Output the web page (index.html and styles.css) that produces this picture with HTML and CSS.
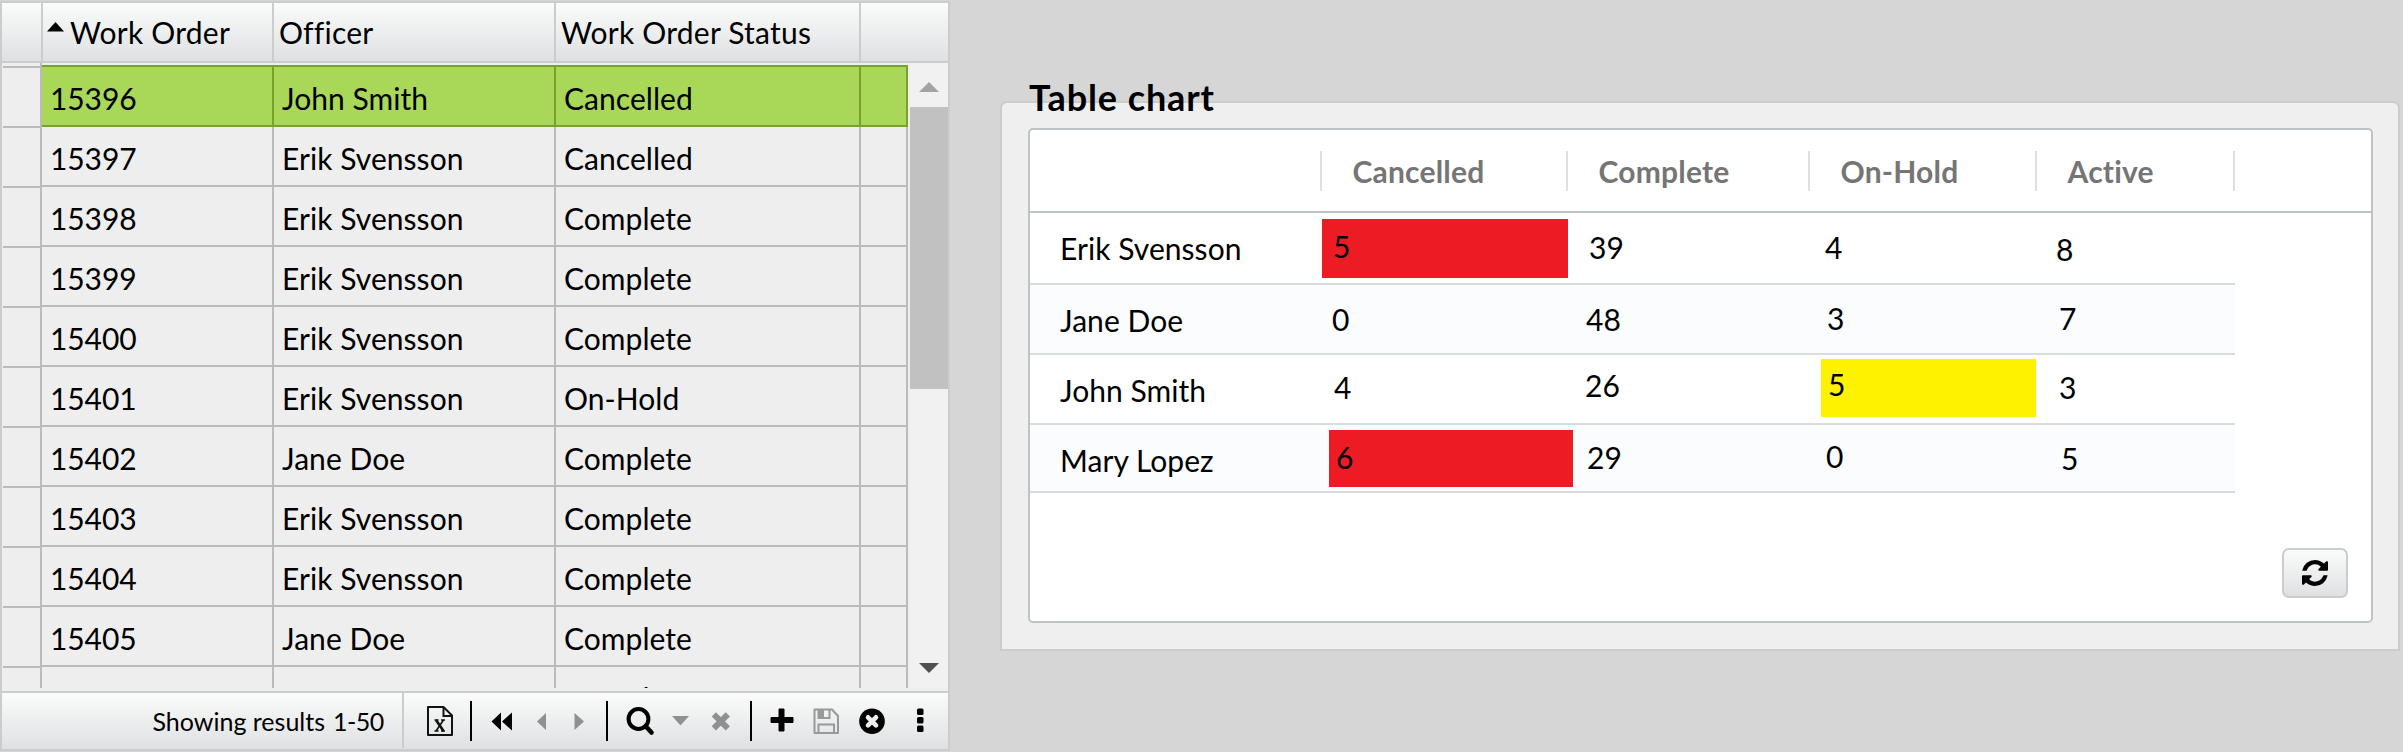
FILE: index.html
```
<!DOCTYPE html>
<html lang="en">
<head>
<meta charset="utf-8">
<title>Work orders</title>
<link rel="stylesheet" href="styles.css">
</head>
<body>
<main class="page">
<section class="orders">
  <div class="head">
    <div></div>
    <div class="sorted"><svg width="17" height="10" viewBox="0 0 17 10"><path d="M0 9.5L8.5 0L17 9.5z"/></svg><span>Work Order</span></div>
    <div>Officer</div>
    <div>Work Order Status</div>
    <div></div>
  </div>
  <div class="body">
    <div class="gutter"><i></i><i></i><i></i><i></i><i></i><i></i><i></i><i></i><i></i><i></i><i></i></div>
    <div class="rows">
      <div class="row selected"><div>15396</div><div>John Smith</div><div>Cancelled</div><div></div></div>
      <div class="row"><div>15397</div><div>Erik Svensson</div><div>Cancelled</div><div></div></div>
      <div class="row"><div>15398</div><div>Erik Svensson</div><div>Complete</div><div></div></div>
      <div class="row"><div>15399</div><div>Erik Svensson</div><div>Complete</div><div></div></div>
      <div class="row"><div>15400</div><div>Erik Svensson</div><div>Complete</div><div></div></div>
      <div class="row"><div>15401</div><div>Erik Svensson</div><div>On-Hold</div><div></div></div>
      <div class="row"><div>15402</div><div>Jane Doe</div><div>Complete</div><div></div></div>
      <div class="row"><div>15403</div><div>Erik Svensson</div><div>Complete</div><div></div></div>
      <div class="row"><div>15404</div><div>Erik Svensson</div><div>Complete</div><div></div></div>
      <div class="row"><div>15405</div><div>Jane Doe</div><div>Complete</div><div></div></div>
      <div class="row"><div></div><div></div><div>Complete</div><div></div></div>
    </div>
    <div class="scroll">
      <svg width="20" height="10" viewBox="0 0 20 10"><path fill="#a3a3a3" d="M0 10L10 0L20 10z"/></svg>
      <div class="thumb"></div>
      <svg class="down" width="20" height="10" viewBox="0 0 20 10"><path fill="#505050" d="M0 0H20L10 10z"/></svg>
    </div>
  </div>
  <div class="toolbar">
    <div class="results"><span>Showing results</span><span class="range">1-50</span></div>
    <svg class="tools" width="544" height="56" viewBox="404 693 544 56">
      <g fill="none" stroke="#111" stroke-width="2"><path d="M428 707H443.500L452 715.500V735H428z" stroke-linejoin="round"/><path d="M443.500 707V716H452"/></g>
      <path d="M436 720L443.500 731" stroke="#111" stroke-width="2.600"/><path d="M443.500 720L436 731M434.500 720H438.500M441 720H445M434.500 731H438.500M441 731H445" stroke="#111" stroke-width="1.600"/>
      <path d="M470 701h2v40h-2zM606 701h2v40h-2zM750 701h2v40h-2z"/>
      <path d="M491.500 721.500L501 712.500V730.500zM502 721.500L512 712.500V730.500z"/>
      <path fill="#8f9090" d="M537 721.500L546 713V730zM584 721.500L574.500 713V730z"/>
      <circle cx="638.500" cy="719" r="9.900" fill="none" stroke="#000" stroke-width="4"/><path d="M646 726.500L651.500 732.500" stroke="#000" stroke-width="4.600" stroke-linecap="round"/>
      <path fill="#8f9090" d="M672 716H689L680.500 725.500z"/>
      <path d="M713.800 714.300L727.800 728.300M727.800 714.300L713.800 728.300" stroke="#8f9090" stroke-width="6"/>
      <path d="M779 709h5v8.500h9v5h-9v8.500h-5v-8.500h-8v-5h8z" stroke="#000" stroke-linejoin="round"/>
      <g fill="none" stroke="#97999a" stroke-width="2"><path d="M814.500 709.500H832L838 716V733H814.500z" stroke-linejoin="round"/><path d="M818.500 709.500V718H829.500V709.500M818.500 733V724.500H834V733"/></g><path fill="#97999a" d="M819 710h5v8h-5z"/>
      <circle cx="872" cy="721.300" r="12.800"/><path d="M868 717.300L876 725.300M876 717.300L868 725.300" stroke="#eceded" stroke-width="4.600" stroke-linecap="round"/>
      <rect x="917" y="708.500" width="6.500" height="6.500" rx="1.500"/><rect x="917" y="717" width="6.500" height="6.500" rx="1.500"/><rect x="917" y="725.500" width="6.500" height="6.500" rx="1.500"/>
    </svg>
  </div>
</section>
<section class="panel">
  <h2>Table chart</h2>
  <div class="chart">
    <div class="chead"><div></div><div>Cancelled</div><div>Complete</div><div>On-Hold</div><div>Active</div></div>
    <div class="crow r1"><div>Erik Svensson</div><div class="red">5</div><div>39</div><div>4</div><div>8</div></div>
    <div class="crow r2"><div>Jane Doe</div><div>0</div><div>48</div><div>3</div><div>7</div></div>
    <div class="crow r3"><div>John Smith</div><div>4</div><div>26</div><div class="yellow">5</div><div>3</div></div>
    <div class="crow r4"><div>Mary Lopez</div><div class="red">6</div><div>29</div><div>0</div><div>5</div></div>
    <button class="refresh" aria-label="Refresh"><svg width="26" height="26" viewBox="0 0 1536 1536"><path d="M1511 928q0 5-1 7-64 268-268 434.500T764 1536q-146 0-282.500-55T238 1324l-129 129q-19 19-45 19t-45-19-19-45V960q0-26 19-45t45-19h448q26 0 45 19t19 45-19 45l-137 137q71 66 161 102t187 36q134 0 250-65t186-179q11-17 53-117 8-23 30-23h192q13 0 22.500 9.500t9.500 22.500zm25-800v448q0 26-19 45t-45 19h-448q-26 0-45-19t-19-45 19-45l138-138Q969 256 768 256q-134 0-250 65T332 500q-11 17-53 117-8 23-30 23H50q-13 0-22.500-9.500T18 608v-7q65-268 270-434.500T768 0q146 0 284 55.500T1297 212l130-129q19-19 45-19t45 19 19 45z"/></svg></button>
  </div>
</section>
</main>
</body>
</html>
```
FILE: styles.css
```
* { box-sizing: border-box; }
body { margin: 0; background: #d6d6d6; font: 30px/36px Lato, "Liberation Sans", sans-serif; color: #000; overflow: hidden; }
.page { display: flex; width: 2403px; height: 752px; align-items: flex-start; }
svg { display: block; flex: none; }

.orders { width: 950px; height: 750px; margin-top: 1px; border: 2px solid #ccc; background: #eee; flex: none; }
.head { display: grid; grid-template-columns: 41px 231px 282px 305px 87px; height: 60px; border-bottom: 2px solid #ccc; background: linear-gradient(#fafcfb, #dfe0e2); letter-spacing: .22px; }
.head > div { padding: 11px 0 0 5px; border-right: 2px solid #ccc; white-space: nowrap; }
.head > div:last-child { border-right: 0; }
.head .sorted { display: flex; padding-left: 4px; }
.sorted svg { margin-top: 8px; }
.sorted span { margin-left: 6px; }

.body { display: flex; height: 628px; }
.gutter { width: 40px; height: 625px; overflow: hidden; padding-top: 3px; border-right: 2px solid #bbb; }
.gutter i { display: block; height: 60px; margin-left: 1px; border-top: 2px solid #bbb; }
.rows { width: 866px; height: 625px; padding-top: 2px; overflow: hidden; }
.row { display: grid; grid-template-columns: 232px 282px 305px 47px; height: 60px; }
.row > div { padding: 13px 0 0 8px; border-right: 2px solid #bbb; border-bottom: 2px solid #bbb; white-space: nowrap; letter-spacing: .05px; }
.row > div:first-child { letter-spacing: -.1px; }
.row.selected { height: 62px; }
.selected > div { background: #a9d757; border-color: #78a22b; border-top: 2px solid #78a22b; }
.scroll { width: 38px; height: 625px; margin-left: 2px; background: #f1f1f1; display: flex; flex-direction: column; align-items: center; padding-top: 19px; }
.thumb { width: 38px; height: 282px; margin-top: 15px; background: #c1c1c1; }
.down { margin-top: 274px; }

.toolbar { display: flex; height: 58px; border-top: 2px solid #ccc; background: linear-gradient(#fafcfb, #dfe0e2); }
.results { width: 402px; height: 55px; border-right: 2px solid #ccc; display: flex; padding: 13px 0 0 150.500px; font-size: 25px; line-height: 30px; white-space: nowrap; }
.range { margin-left: 8px; letter-spacing: -.5px; }

.panel { width: 1400px; height: 550px; margin: 101px 0 0 50px; border: 2px solid #ccc; border-radius: 7px 7px 0 0; background: #efefef; padding-left: 26px; flex: none; }
h2 { margin: -27px 0 0 1px; height: 52px; font: 700 36px/43px Lato, sans-serif; letter-spacing: .9px; white-space: nowrap; }
.chart { position: relative; width: 1345px; height: 495px; background: #fff; border: 2px solid #bec3c7; border-radius: 5px; }
.chead, .crow { display: grid; grid-template-columns: 291px 245px 242px 228px 199px; }
.chead { grid-template-columns: 292px 246px 242px 227px 198px; height: 83px; border-bottom: 2px solid #bec3c7; padding-top: 21px; color: #757575; font-weight: 700; letter-spacing: .2px; }
.chead > div { height: 40px; border-right: 2px solid #dde0e3; padding: 2px 0 0 30.500px; }
.crow { width: 1205px; height: 70px; border-bottom: 2px solid #d9dcdf; }
.crow > div { padding: 14px 0 0 13px; }
.crow > div:first-child { padding: 17px 0 0 30px; letter-spacing: .05px; }
.r1 { height: 72px; }
.r4 { height: 68px; }
.r2, .r4 { background: #fbfcfe; }
.crow > .red { background: #ed1c24; }
.crow > .yellow { background: #fff200; }

/* numeric cells */
.r1 > .red { width: 246px; height: 59px; margin: 6px 0 0 1px; padding: 9px 0 0 11px; }
.r1 > :nth-child(3) { padding: 16px 0 0 23px; }
.r1 > :nth-child(4) { padding: 16px 0 0 17px; }
.r1 > :nth-child(5) { padding: 18px 0 0 20px; }
.r2 > :nth-child(2) { padding: 16px 0 0 11px; }
.r2 > :nth-child(3) { padding: 16px 0 0 20px; }
.r2 > :nth-child(4) { padding: 15px 0 0 19px; }
.r2 > :nth-child(5) { padding: 15px 0 0 23px; }
.r3 > :nth-child(3) { padding: 12px 0 0 19px; }
.r3 > .yellow { width: 215px; height: 58px; margin: 4px 0 0 13px; padding: 7px 0 0 7px; }
.r3 > :nth-child(5) { padding: 14px 0 0 23px; }
.r4 > .red { width: 244px; height: 57px; margin: 5px 0 0 8px; padding: 9px 0 0 7px; }
.r4 > :nth-child(3) { padding: 14px 0 0 21px; }
.r4 > :nth-child(4) { padding: 13px 0 0 18px; }
.r4 > :nth-child(5) { padding: 15px 0 0 25px; }

.refresh { position: absolute; right: 23px; bottom: 23px; width: 66px; height: 50px; padding: 0; display: flex; align-items: center; justify-content: center; border: 2px solid #ccc; border-radius: 7px; background: linear-gradient(#fafcfb, #dfe0e2); }
```
